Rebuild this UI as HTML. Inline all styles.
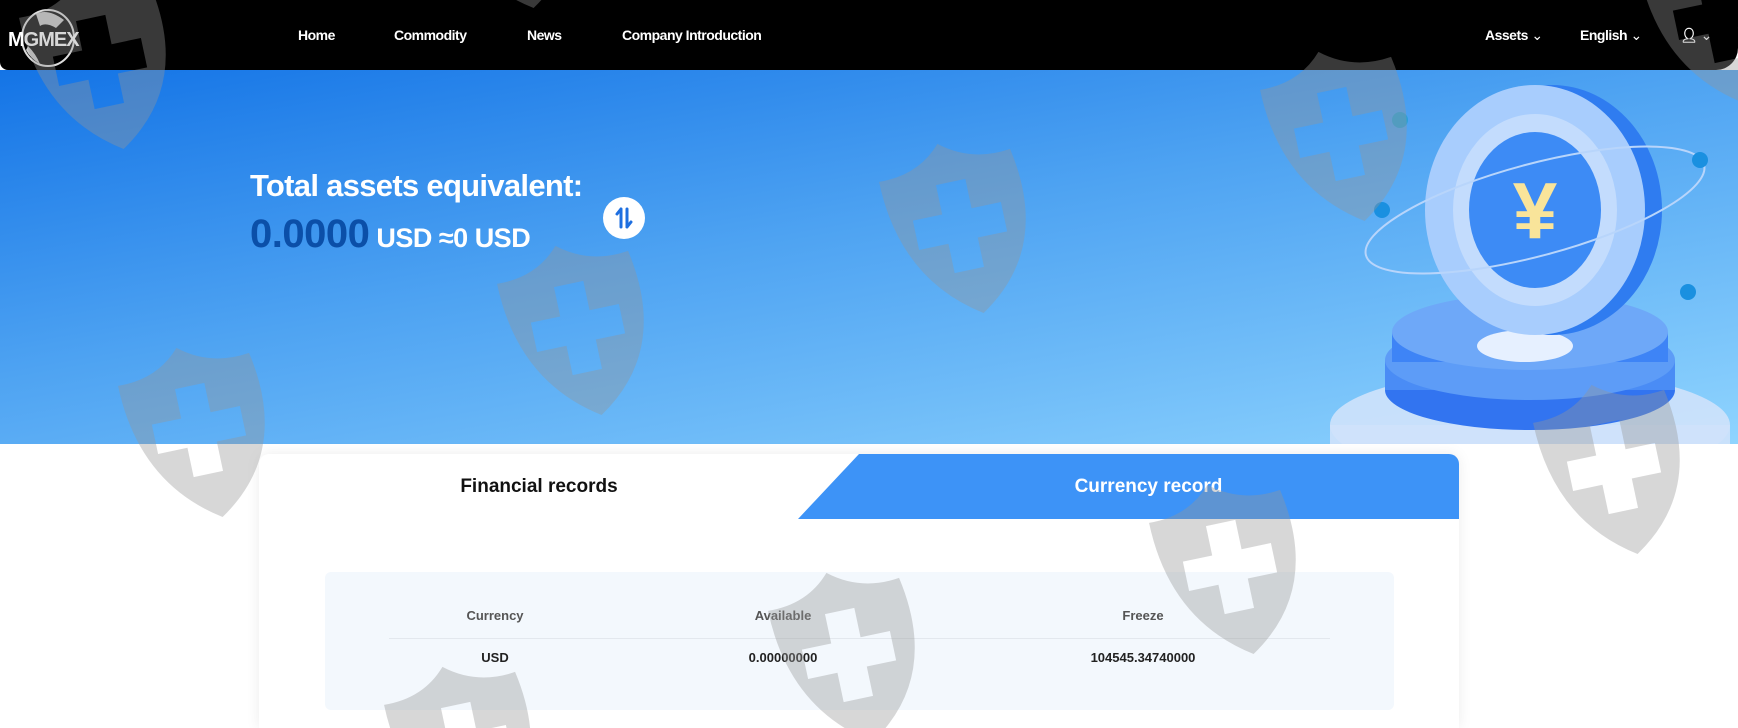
<!DOCTYPE html>
<html><head><meta charset="utf-8"><style>
*{margin:0;padding:0;box-sizing:border-box}
html,body{width:1738px;height:728px;overflow:hidden}
body{background:#fff;font-family:"Liberation Sans",sans-serif;position:relative}
.nav{position:absolute;left:0;top:0;width:1738px;height:70px;background:#000;border-radius:0 0 22px 8px;color:#fff;font-weight:bold;font-size:14px;z-index:1}
.nav span{position:absolute;top:27px;letter-spacing:-0.5px}
.hero{position:absolute;left:0;top:70px;width:1738px;height:374px;background:linear-gradient(170deg,#1474e6 0%,#4ea3f2 45%,#8fd4fe 100%)}
.t1{position:absolute;left:250px;top:168px;color:#fff;font-weight:bold;font-size:31px;letter-spacing:-0.7px;z-index:2}
.t2{position:absolute;left:250px;top:212px;color:#fff;font-weight:bold;font-size:27px;z-index:2;letter-spacing:-0.5px}
.t2 b{color:#0b4fa8;font-size:40px}
.sw{position:absolute;left:603px;top:197px;width:42px;height:42px;border-radius:50%;background:#fff;z-index:2}
.card{position:absolute;left:259px;top:454px;width:1200px;height:274px;background:#fff;border-radius:10px 10px 0 0;box-shadow:0 0 14px rgba(0,0,0,.08)}
.tab1{position:absolute;left:0;top:0;width:560px;height:65px;text-align:center;line-height:65px;font-weight:bold;font-size:19px;color:#111}
.tab2{position:absolute;left:539px;top:0;width:661px;height:65px;background:#3d93f7;clip-path:polygon(61px 0,100% 0,100% 100%,0 100%);border-radius:0 10px 0 0;color:#fff;font-weight:bold;font-size:19px;line-height:65px;text-align:center;padding-left:40px}
.tbl{position:absolute;left:66px;top:118px;width:1069px;height:138px;background:#f3f8fd;border-radius:6px;font-size:13px;font-weight:bold}
.tbl span{position:absolute;transform:translateX(-50%)}
.hd{color:#555;top:36px}.dd{color:#222;top:78px}
.line{position:absolute;left:64px;right:64px;top:66px;height:1px;background:#e3e8ee}
.wm{position:absolute;z-index:5;pointer-events:none}
</style></head><body>
<div class="hero"></div>
<div class="nav">
<svg style="position:absolute;left:6px;top:6px" width="84" height="62"><ellipse cx="42" cy="32" rx="26" ry="28" fill="none" stroke="#ddd" stroke-width="2"/><path d="M30 8 Q42 2 58 14 L50 22 Q40 16 34 20Z M22 40 Q30 48 34 58 Q24 52 20 44Z" fill="#ccc"/><text x="2" y="40" fill="#fff" font-family="Liberation Sans" font-size="20" font-weight="bold" letter-spacing="-1">MGMEX</text></svg>
<span style="left:298px">Home</span><span style="left:394px">Commodity</span><span style="left:527px">News</span><span style="left:622px">Company Introduction</span>
<span style="left:1485px">Assets <span style="position:static;font-weight:normal">&#8964;</span></span>
<span style="left:1580px">English <span style="position:static;font-weight:normal">&#8964;</span></span>
<span style="left:1680px">&#128100;&#xFE0E; <span style="position:static;font-weight:normal">&#8964;</span></span>
</div>
<div class="t1">Total assets equivalent:</div>
<div class="t2"><b>0.0000</b> USD ≈0 USD</div>
<div class="sw"><svg width="42" height="42"><path d="M18 12 V30 M18 12 L14 17 M24 30 V12 M24 30 L28 25" stroke="#1e6fe0" stroke-width="3" fill="none" stroke-linecap="round"/></svg></div>
<svg style="position:absolute;left:1320px;top:70px" width="418" height="374">
<ellipse cx="210" cy="355" rx="200" ry="55" fill="#cfe2fb" opacity=".9"/>
<rect x="10" y="355" width="400" height="30" fill="#cfe2fb" opacity=".9"/>
<ellipse cx="210" cy="320" rx="145" ry="40" fill="#3274f0"/>
<rect x="65" y="290" width="290" height="30" fill="#4a8cf5"/>
<ellipse cx="210" cy="290" rx="145" ry="40" fill="#5d9cf7"/>
<rect x="72" y="262" width="276" height="30" fill="#3e84f6"/>
<ellipse cx="210" cy="262" rx="138" ry="38" fill="#6ea8f8"/>
<ellipse cx="205" cy="276" rx="48" ry="16" fill="#e6f0ff"/>
<ellipse cx="232" cy="140" rx="110" ry="125" fill="#2f7cf0"/>
<ellipse cx="215" cy="140" rx="110" ry="125" fill="#a8cdfd"/>
<ellipse cx="215" cy="140" rx="82" ry="96" fill="#c3dcfd"/>
<ellipse cx="215" cy="140" rx="66" ry="78" fill="#3d8bf5"/>
<text x="215" y="168" text-anchor="middle" font-size="80" font-weight="bold" fill="#f9e49a" font-family="Liberation Sans">¥</text>
<ellipse cx="215" cy="140" rx="175" ry="46" fill="none" stroke="#b8d5fb" stroke-width="2" transform="rotate(-15 215 140)"/>
<circle cx="62" cy="140" r="8" fill="#1a90e0"/><circle cx="80" cy="50" r="8" fill="#29a0d8"/><circle cx="380" cy="90" r="8" fill="#1a90e0"/><circle cx="368" cy="222" r="8" fill="#1a90e0"/>
</svg>
<div class="card">
<div class="tab1">Financial records</div>
<div class="tab2">Currency record</div>
<div class="tbl">
<span class="hd" style="left:170px">Currency</span><span class="hd" style="left:458px">Available</span><span class="hd" style="left:818px">Freeze</span>
<div class="line"></div>
<span class="dd" style="left:170px">USD</span><span class="dd" style="left:458px">0.00000000</span><span class="dd" style="left:818px">104545.34740000</span>
</div></div>
<svg class="wm" width="1738" height="728" style="left:0;top:0">
<defs><path id="s" d="M-70 -60 Q-30 -58 -5 -85 Q25 -60 65 -65 Q85 40 5 90 Q-70 40 -70 -60Z M-15 -45 L15 -45 L15 -15 L45 -15 L45 15 L15 15 L15 45 L-15 45 L-15 15 L-45 15 L-45 -15 L-15 -15Z" fill-rule="evenodd" fill="rgba(150,150,150,0.38)"/></defs>
<use href="#s" transform="translate(100,62) rotate(-12)"/>
<use href="#s" transform="translate(578,328) rotate(-12)"/>
<use href="#s" transform="translate(199,430) rotate(-12)"/>
<use href="#s" transform="translate(960,226) rotate(-12)"/>
<use href="#s" transform="translate(1341,134) rotate(-12)"/>
<use href="#s" transform="translate(1614,467) rotate(-12)"/>
<use href="#s" transform="translate(1230,567) rotate(-12)"/>
<use href="#s" transform="translate(849,655) rotate(-12)"/>
<use href="#s" transform="translate(465,749) rotate(-12)"/>
<use href="#s" transform="translate(1720,16) rotate(-12)"/>
<use href="#s" transform="translate(510,-79) rotate(-12)"/>
</svg>
</body></html>
